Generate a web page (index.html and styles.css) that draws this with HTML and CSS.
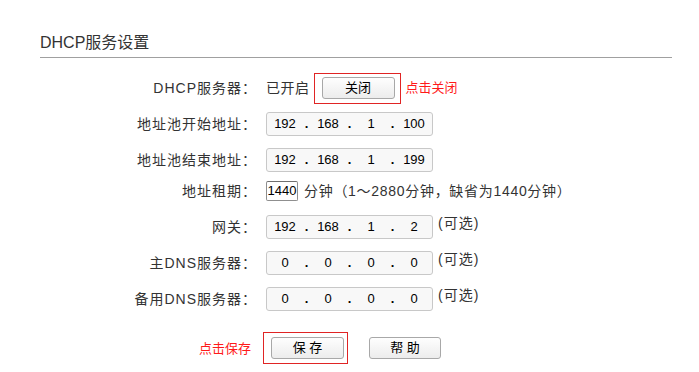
FILE: index.html
```html
<!DOCTYPE html>
<html lang="zh-CN">
<head>
<meta charset="utf-8">
<title>DHCP服务设置</title>
<link rel="stylesheet" href="styles.css">
</head>
<body>
<div class="page">
  <h2 class="title">DHCP服务设置</h2>
  <div class="form">
    <div class="row">
      <div class="label">DHCP服务器：</div>
      <div class="value">
        <span class="status">已开启</span>
        <span class="hl-box hl-top"><button class="btn">关闭</button></span>
        <span class="hint">点击关闭</span>
      </div>
    </div>
    <div class="row">
      <div class="label">地址池开始地址：</div>
      <div class="value">
        <div class="ip"><span class="oct">192</span><span class="dot">.</span><span class="oct">168</span><span class="dot">.</span><span class="oct">1</span><span class="dot">.</span><span class="oct">100</span></div>
      </div>
    </div>
    <div class="row">
      <div class="label">地址池结束地址：</div>
      <div class="value">
        <div class="ip"><span class="oct">192</span><span class="dot">.</span><span class="oct">168</span><span class="dot">.</span><span class="oct">1</span><span class="dot">.</span><span class="oct">199</span></div>
      </div>
    </div>
    <div class="row row-short">
      <div class="label">地址租期：</div>
      <div class="value">
        <span class="lease">1440</span>
        <span class="note">分钟（1～2880分钟，缺省为1440分钟）</span>
      </div>
    </div>
    <div class="row">
      <div class="label">网关：</div>
      <div class="value">
        <div class="ip"><span class="oct">192</span><span class="dot">.</span><span class="oct">168</span><span class="dot">.</span><span class="oct">1</span><span class="dot">.</span><span class="oct">2</span></div>
        <span class="opt">(可选)</span>
      </div>
    </div>
    <div class="row">
      <div class="label">主DNS服务器：</div>
      <div class="value">
        <div class="ip"><span class="oct">0</span><span class="dot">.</span><span class="oct">0</span><span class="dot">.</span><span class="oct">0</span><span class="dot">.</span><span class="oct">0</span></div>
        <span class="opt">(可选)</span>
      </div>
    </div>
    <div class="row">
      <div class="label">备用DNS服务器：</div>
      <div class="value">
        <div class="ip"><span class="oct">0</span><span class="dot">.</span><span class="oct">0</span><span class="dot">.</span><span class="oct">0</span><span class="dot">.</span><span class="oct">0</span></div>
        <span class="opt">(可选)</span>
      </div>
    </div>
    <div class="actions">
      <div class="label"><span class="hint">点击保存</span></div>
      <span class="hl-box hl-save"><button class="btn btn-save">保 存</button></span>
      <button class="btn btn-help">帮 助</button>
    </div>
  </div>
</div>
</body>
</html>
```

FILE: styles.css
```css
html, body {
  margin: 0;
  padding: 0;
  background: #ffffff;
}

body {
  font-family: "Liberation Sans", "Noto Sans CJK SC", sans-serif;
  color: #333333;
  font-size: 14px;
}

.page {
  width: 699px;
  height: 372px;
  overflow: hidden;
}

.title {
  margin: 0 27px 0 40px;
  padding: 33px 0 4px 0;
  font-size: 16px;
  font-weight: normal;
  line-height: 20px;
  color: #333333;
  border-bottom: 1px solid #a0a0a0;
}

.form {
  margin-top: 12px;
  display: flex;
  flex-direction: column;
}

.row {
  display: flex;
  align-items: center;
  height: 36px;
}

.row-short {
  height: 26px;
  margin-bottom: 5px;
}

.label {
  width: 257px;
  flex: none;
  text-align: right;
  line-height: 18px;
  font-size: 14px;
  letter-spacing: 1px;
  color: #333333;
}

.value {
  margin-left: 9px;
  display: flex;
  align-items: center;
  line-height: 18px;
}

.status {
  font-size: 14px;
  letter-spacing: 0.5px;
}

.hl-box {
  display: inline-flex;
  border: 1px solid #e02424;
  box-sizing: border-box;
}

.hl-top {
  margin-left: 4px;
  width: 87px;
  height: 31px;
  padding: 3px 5px 0 7px;
}

.btn {
  width: 73px;
  height: 22px;
  box-sizing: border-box;
  border: 1px solid #a8a8a8;
  border-radius: 3px;
  background: linear-gradient(#fefefe, #ececec);
  font-family: "Liberation Sans", "Noto Sans CJK SC", sans-serif;
  font-size: 13px;
  color: #000000;
  line-height: 18px;
  padding: 0;
  margin: 0;
}

.hint {
  margin-left: 5px;
  font-size: 13px;
  letter-spacing: 0;
  color: #ff1a1a;
}

.ip {
  width: 167px;
  height: 24px;
  box-sizing: border-box;
  border: 1px solid #c8c8c8;
  border-radius: 3px;
  background: #f8f8f8;
  display: flex;
  align-items: center;
  padding: 0 3px 0 3px;
  font-size: 13px;
  color: #000000;
}

.oct {
  width: 30px;
  text-align: center;
  line-height: 16px;
}

.dot {
  width: 13px;
  text-align: center;
  font-weight: bold;
  line-height: 16px;
}

.opt {
  align-self: flex-start;
  margin-left: 5px;
  margin-top: -1px;
  font-size: 14px;
  letter-spacing: 1px;
  line-height: 18px;
}

.lease {
  width: 32px;
  height: 20px;
  box-sizing: border-box;
  border: 1px solid #8f8f8f;
  border-top-color: #6f6f6f;
  border-radius: 2px;
  background: #ffffff;
  font-size: 13px;
  color: #000000;
  line-height: 18px;
  text-align: center;
}

.note {
  margin-left: 6px;
  font-size: 14px;
  letter-spacing: 0.7px;
}

.actions {
  display: flex;
  align-items: center;
  margin-top: 15px;
}

.actions .label {
  width: 251px;
}

.actions .hint {
  margin-left: 0;
}

.hl-save {
  margin-left: 12px;
  width: 85px;
  height: 32px;
  padding: 4px 3px 0 7px;
}

.btn-help {
  margin-left: 21px;
  width: 72px;
}
```
